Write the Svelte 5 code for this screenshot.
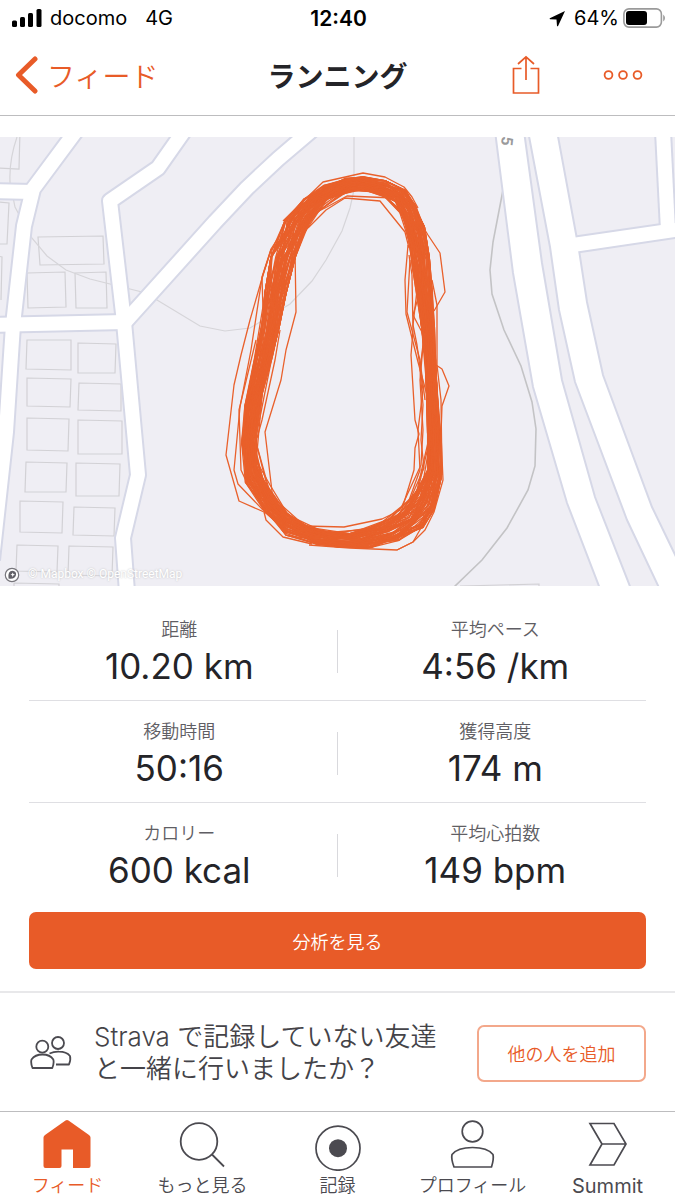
<script>
  const stats = [
    [{ label: '距離', value: '10.20 km' }, { label: '平均ペース', value: '4:56 /km' }],
    [{ label: '移動時間', value: '50:16' }, { label: '獲得高度', value: '174 m' }],
    [{ label: 'カロリー', value: '600 kcal' }, { label: '平均心拍数', value: '149 bpm' }]
  ];

  // Streets drawn as a casing line with a white line on top
  const streets = [
    'M76 131 L33 189 L24 226 L13 325 L11 355 L6 432 L-8 560',
    'M-6 191 L33 192',
    'M-6 325 L125 322',
    'M184 131 L158 168 L110 201 L124 322 L138 475 L123 538 L127 592',
    'M125 322 L215 222 L247 188 L278 159 L312 130',
    'M566 246 L682 229',
    'M663 131 L668 230'
  ];

  const avenues = [
    'M495 131 L513 273 L533 387 L567 503 L602 594 L633 594 L595 497 L562 380 L542 263 L524 131Z',
    'M528 131 L550 247 L559 310 L575 382 L627 520 L662 594 L694 594 L652 507 L603 375 L587 302 L579 250 L557 131Z'
  ];

  const buildings = [
    'M-2 168 L19 169 L20 130', 'M-2 202 L9 203 L7 244 L-2 244', 'M-2 256 L2 257 L1 300',
    'M38 237 L103 236 L104 264 L40 265Z', 'M27 273 L65 272 L66 307 L28 308Z',
    'M75 273 L106 272 L107 308 L76 308Z', 'M27 340 L71 340 L71 370 L26 369Z',
    'M78 343 L116 344 L115 373 L78 373Z', 'M27 378 L71 379 L70 407 L27 406Z',
    'M79 383 L121 384 L121 411 L78 410Z', 'M27 418 L69 419 L68 451 L27 450Z',
    'M78 420 L122 421 L122 454 L78 454Z', 'M26 462 L67 463 L66 492 L25 492Z',
    'M76 463 L120 464 L119 496 L76 496Z', 'M20 501 L63 502 L62 533 L20 532Z',
    'M74 507 L115 508 L114 536 L73 535Z', 'M17 545 L58 546 L57 572 L16 571Z',
    'M69 546 L113 547 L112 576 L68 575Z', 'M14 590 L14 583 L59 584 L59 590',
    'M460 586 L539 584 L539 590'
  ];

  // Outer x, outer y, inner x, inner y of the running lane, clockwise from the top
  const lane = [
    [363, 176, 363, 190], [385, 180, 380, 195], [406, 190, 395, 202], [416, 205, 404, 221],
    [425, 226, 409, 246], [430, 257, 412, 269], [433, 293, 417, 293], [435, 327, 421, 327],
    [436, 360, 425, 360], [437, 383, 426, 383], [441, 433, 427, 433], [442, 477, 427, 470],
    [435, 510, 415, 492], [424, 528, 400, 511], [400, 541, 378, 524], [372, 548, 349, 533],
    [342, 548, 326, 532], [317, 545, 306, 525], [286, 536, 287, 513], [265, 513, 271, 495],
    [245, 483, 257, 467], [241, 443, 256, 440], [244, 407, 263, 393], [252, 367, 273, 357],
    [261, 327, 280, 327], [264, 293, 287, 293], [270, 257, 296, 258], [279, 240, 305, 233],
    [284, 220, 314, 216], [303, 199, 328, 199], [323, 185, 345, 194], [345, 178, 352, 191]
  ];

  let seed = 71;
  function random() {
    seed = (seed * 16807) % 2147483647;
    return seed / 2147483647;
  }

  function buildLaps(count) {
    const laps = [];
    for (let n = 0; n < count; n++) {
      const base = n / (count - 1);
      const points = [];
      lane.forEach(([ox, oy, ix, iy], i) => {
        if (i % 2 === n % 2 && random() < 0.35) return;
        const t = Math.min(0.96, Math.max(0.04, base + (random() - 0.5) * 0.4));
        points.push(`${(ox + (ix - ox) * t).toFixed(1)},${(oy + (iy - oy) * t).toFixed(1)}`);
      });
      laps.push(`M${points.join('L')}Z`);
    }
    return laps;
  }

  const laps = buildLaps(62);

  const strays = [
    'M280 240 L271 250 L263 275 L250 320 L241 355 L234 385 L226 455 L239 501 L264 512 L266 520 L283 537 L312 544',
    'M271 250 L262 278 L251 350 L240 407 L234 470 L238 484 L263 510',
    'M256 340 L239 410 L241 470 L248 485',
    'M280 235 L271 249 L262 277 L263 310',
    'M295 250 L296 312 L286 350 L281 380 L265 432 L273 500',
    'M257 462 L270 485 L287 513',
    'M256 465 L273 498',
    'M280 330 L275 360 L262 420 L257 438',
    'M283 221 L323 182 L363 173 L385 177 L404 187 L412 197 L418 208',
    'M300 220 L325 208 L347 196 L394 198 L404 195',
    'M308 228 L326 210 L345 198 L380 201 L405 232 L409 248',
    'M420 222 L428 235 L440 253 L445 292 L434 311',
    'M408 245 L405 280 L406 314 L418 362 L427 395',
    'M410 260 L407 312 L420 360 L425 400',
    'M409 255 L412 275 L413 330 L411 355 L415 420 L419 434 L415 448 L414 470 L402 509',
    'M419 295 L413 315 L424 336 L420 370 L423 405 L421 440 L424 468 L410 500',
    'M417 290 L413 325 L417 345 L423 390 L418 430 L420 470 L408 503',
    'M424 335 L420 380 L423 430 L421 465 L401 508',
    'M436 365 L442 369 L449 386 L442 406 L441 434 L443 480 L434 512 L425 530 L413 542 L397 550',
    'M304 526 L344 527 L382 519 L405 508',
    'M309 545 L350 548 L397 550 L413 542 L425 521',
    'M304 205 L284 223 L272 250 L266 290',
    'M432 280 L437 305 L437 365 L441 400 L442 475'
  ];
</script>

<div class="screen">
  <header>
    <div class="status">
      <div class="carrier">
        <svg width="30" height="20" viewBox="0 0 30 20" aria-hidden="true">
          <rect x="0" y="12.500" width="5" height="6.500" rx="1.500" /><rect x="8" y="9" width="5" height="10" rx="1.500" /><rect x="16" y="5" width="5" height="14" rx="1.500" /><rect x="24.500" y="1" width="5" height="18" rx="1.500" />
        </svg>
        <span>docomo</span><span class="net">4G</span>
      </div>
      <time>12:40</time>
      <div class="power">
        <svg width="17" height="17" viewBox="0 0 17 17" aria-hidden="true"><path d="M16 1 L0.800 8.200 Q0.300 9 1.200 9.200 L7.500 9.500 L8 16 Q8.500 16.800 9.200 15.800Z" /></svg>
        <span>64%</span>
        <svg width="42" height="20" viewBox="0 0 42 20" aria-hidden="true">
          <rect x="0.900" y="0.900" width="37.500" height="18.200" rx="5" fill="none" stroke="#9a9a9a" stroke-width="1.600" />
          <rect x="3" y="3" width="21" height="14" rx="3" /><path d="M40.200 6.500 Q42 8 42 10 Q42 12 40.200 13.500Z" fill="#9a9a9a" />
        </svg>
      </div>
    </div>
    <div class="nav">
      <button class="back">
        <svg width="24" height="40" viewBox="0 0 24 40" aria-hidden="true"><path d="M20 4 L3.500 20 L20 36" fill="none" stroke="currentColor" stroke-width="5" stroke-linecap="round" stroke-linejoin="round" /></svg>
        <span>フィード</span>
      </button>
      <h1>ランニング</h1>
      <div class="actions">
        <button aria-label="共有">
          <svg width="28" height="40" viewBox="0 0 28 40" fill="none" stroke="currentColor" stroke-width="1.700"><path d="M9.500 13.500 H1.500 V38 H26.500 V13.500 H18.500 M14 25 V2 M6 9 L14 1.800 L22 9" /></svg>
        </button>
        <button aria-label="その他">
          <svg width="40" height="12" viewBox="0 0 40 12" fill="none" stroke="currentColor" stroke-width="1.800"><circle cx="5.500" cy="6" r="3.900" /><circle cx="20" cy="6" r="3.900" /><circle cx="34.500" cy="6" r="3.900" /></svg>
        </button>
      </div>
    </div>
  </header>

  <main>
    <div class="map">
      <svg viewBox="0 137 675 449" role="img" aria-label="ランニング">
        <rect y="137" width="675" height="449" fill="#efeef4" />
        <g fill="none" stroke="#d2d1d5" stroke-width="1.200">
          {#each buildings as d}<path {d} />{/each}
          <path d="M17 137 Q9 160 10 182 L15 207 L31 237 L47 256 L66 270 L90 279 L110 284 L142 292 L157 300 L200 326 L225 331 L250 328 L290 304 L312 281 L326 260 L342 231 L350 208 L354 190 L354 137" stroke="#d6d5d9" />
          <path d="M503 190 L493 242 L490 270 L492 294 L504 330 L521 366 L532 402 L536 429 L535 466 L528 490 L507 528 L482 560 L453 588" stroke="#c3c3c5" stroke-width="1.600" />
        </g>
        <g fill="none" stroke="#d6d8e7" stroke-width="18" stroke-linejoin="round">
          {#each streets as d}<path {d} />{/each}
        </g>
        <g fill="#fff" stroke="#d6d8e7" stroke-width="2">
          {#each avenues as d}<path {d} />{/each}
        </g>
        <g fill="none" stroke="#fff" stroke-width="14" stroke-linejoin="round">
          {#each streets as d}<path {d} />{/each}
        </g>
        <text transform="translate(502 136) rotate(96)" class="road">5</text>
        <g fill="none" stroke="#e9602b" stroke-width="1.300" stroke-linejoin="round">
          {#each laps as d}<path {d} />{/each}
          {#each strays as d}<path {d} />{/each}
        </g>
        <circle cx="12" cy="575" r="6.700" fill="#fff" stroke="#77767c" stroke-width="1.200" />
        <path d="M8.500 578.500 Q7.500 571 12.500 570.700 Q16.500 571 16 575 Q15 579.500 8.500 578.500Z" fill="#626168" />
        <path d="M12.700 572.500 L13.400 574 L15 574.700 L13.400 575.300 L12.700 577 L12 575.300 L10.500 574.700 L12 574Z" fill="#fff" />
      </svg>
      <small>© Mapbox © OpenStreetMap</small>
    </div>

    <section class="stats">
      {#each stats as row}
        <div class="row">
          {#each row as item}
            <div class="stat"><span class="label">{item.label}</span><span class="value">{item.value}</span></div>
          {/each}
        </div>
      {/each}
      <button class="primary">分析を見る</button>
    </section>

    <section class="friends">
      <svg width="42" height="34" viewBox="0 0 42 34" fill="none" stroke="#4b4a50" stroke-width="1.800" stroke-linejoin="round" aria-hidden="true">
        <circle cx="12.300" cy="10.700" r="6" /><circle cx="28" cy="7" r="6" />
        <path d="M2.500 32 Q0.500 27 1.500 23.500 Q5 18.500 12.500 18.500 Q20 18.500 23.300 23.500 Q24.300 27 22.300 32Z" />
        <path d="M19.500 17.500 Q24 15.500 29 15.700 Q36.500 15.700 40 20 Q41 23.500 39 28.500 H26" />
      </svg>
      <p>Strava で記録していない友達と一緒に行いましたか？</p>
      <button class="outline">他の人を追加</button>
    </section>
  </main>

  <nav class="tabs">
    <button class="active">
      <svg width="50" height="52" viewBox="0 0 50 52" fill="currentColor" aria-hidden="true"><path d="M22.500 1.500 Q24 0.500 25.500 1.500 L46 16 Q47.500 17 47.500 18.500 V47 Q47.500 49 45.500 49 H30 V30.500 H18.500 V47 Q18.500 49 16.500 49 H2.500 Q0.500 49 0.500 47 V18.500 Q0.500 17 2 16Z" /></svg>
      <span>フィード</span>
    </button>
    <button>
      <svg width="50" height="52" viewBox="0 0 50 52" fill="none" stroke="currentColor" stroke-width="1.800" aria-hidden="true"><circle cx="21" cy="22.500" r="18.300" /><path d="M34 35.500 L46 47.500" /></svg>
      <span>もっと見る</span>
    </button>
    <button>
      <svg width="50" height="52" viewBox="0 0 50 52" fill="none" stroke="currentColor" stroke-width="1.700" aria-hidden="true"><circle cx="25" cy="29.200" r="22" /><circle cx="25" cy="29.200" r="9" fill="currentColor" stroke="none" /></svg>
      <span>記録</span>
    </button>
    <button>
      <svg width="50" height="52" viewBox="0 0 50 52" fill="none" stroke="currentColor" stroke-width="1.700" stroke-linejoin="round" aria-hidden="true"><circle cx="24.500" cy="12.500" r="10.300" /><path d="M6 48 Q3 40 4 35.500 Q9.500 28.500 24.500 28.500 Q39.500 28.500 45 35.500 Q46 40 43.500 48Z" /></svg>
      <span>プロフィール</span>
    </button>
    <button>
      <svg width="50" height="52" viewBox="0 0 50 52" fill="none" stroke="currentColor" stroke-width="1.700" aria-hidden="true"><path d="M7 4.500 H31 L43 25 L31 46 H7 L19 25Z M19 25 H43" /></svg>
      <span class="latin">Summit</span>
    </button>
  </nav>
</div>

<style>
  :global(body) { margin: 0; background: #fff; }
  .screen {
    font-family: Inter, "Noto Sans CJK JP", sans-serif;
    color: #242428;
    min-height: 100vh;
    display: flex;
    flex-direction: column;
  }
  button {
    font: inherit;
    color: inherit;
    background: none;
    border: 0;
    padding: 0;
    cursor: pointer;
  }
  svg { display: block; flex: none; }
  header { border-bottom: 1px solid #bdbdbf; }
  .status {
    display: grid;
    grid-template-columns: 1fr auto 1fr;
    align-items: center;
    height: 36px;
    padding: 0 10px 0 12px;
    font-size: 20px;
    color: #000;
  }
  .carrier { display: flex; align-items: center; gap: 8px; }
  .net { margin-left: 10px; }
  time { font-weight: 600; font-size: 21px; }
  .power { display: flex; align-items: center; justify-content: flex-end; gap: 4px; }
  .power span { margin-left: 4px; }
  .nav {
    display: grid;
    grid-template-columns: 1fr auto 1fr;
    align-items: center;
    height: 77px;
    padding: 0 32px 2px 15px;
  }
  .back, .actions, .active { color: #e85b28; }
  .back {
    display: flex;
    align-items: center;
    gap: 8px;
    font-size: 28px;
    font-weight: 350;
  }
  h1 { margin: 0 0 0 17px; font-size: 28px; font-weight: 700; }
  .actions { display: flex; align-items: center; justify-content: flex-end; gap: 63px; }
  .map { position: relative; margin-top: 21px; }
  .map svg { width: 100%; height: auto; }
  .map small {
    position: absolute;
    left: 28px;
    bottom: 4px;
    font: 12px/16px Roboto, sans-serif;
    color: #fff;
    text-shadow: 0 0 2px #bbb;
  }
  .road {
    font: 700 16px Roboto, sans-serif;
    fill: #9a9a9c;
  }
  .stats { padding: 13px 29px 22px; display: flex; flex-direction: column; }
  .row {
    position: relative;
    display: grid;
    grid-template-columns: 1fr 1fr;
    height: 101px;
    border-bottom: 1px solid #dfdfe3;
  }
  .row:nth-of-type(3) { border-bottom-color: transparent; }
  .row::before {
    content: "";
    position: absolute;
    left: 50%;
    top: 31px;
    height: 43px;
    margin-left: -1px;
    border-left: 1px solid #d9d9dd;
  }
  .stat {
    display: flex;
    flex-direction: column;
    align-items: center;
    padding: 18px 0 0 7px;
  }
  .stat:first-child { padding: 18px 8px 0 0; }
  .label { font-size: 18px; line-height: 26px; font-weight: 350; color: #5f5e64; }
  .value { font-size: 35px; line-height: 46px; }
  .primary {
    height: 57px;
    margin-top: 7px;
    border-radius: 7px;
    background: #e85b28;
    color: #fff;
    font-size: 18px;
    font-weight: 350;
  }
  .friends {
    border-top: 2px solid #e8e8ea;
    display: flex;
    align-items: center;
    padding: 28px 29px 26px 30px;
  }
  .friends p {
    flex: 1;
    margin: 0 30px 0 22px;
    font-size: 26px;
    line-height: 32px;
    font-weight: 350;
    color: #444348;
  }
  .outline {
    width: 169px;
    height: 57px;
    border: 2px solid #f3a88b;
    border-radius: 7px;
    color: #e85b28;
    font-size: 18px;
    font-weight: 350;
  }
  .tabs {
    margin-top: auto;
    display: grid;
    grid-template-columns: repeat(5, 1fr);
    height: 88px;
    border-top: 1px solid #bdbdbf;
  }
  .tabs button {
    display: flex;
    flex-direction: column;
    align-items: center;
    padding-top: 7px;
    font-size: 18px;
    line-height: 30px;
    font-weight: 350;
    color: #4b4a50;
    white-space: nowrap;
  }
  .tabs .active { color: #e85b28; }
  .tabs .latin { font-size: 20px; font-weight: 400; }
</style>
